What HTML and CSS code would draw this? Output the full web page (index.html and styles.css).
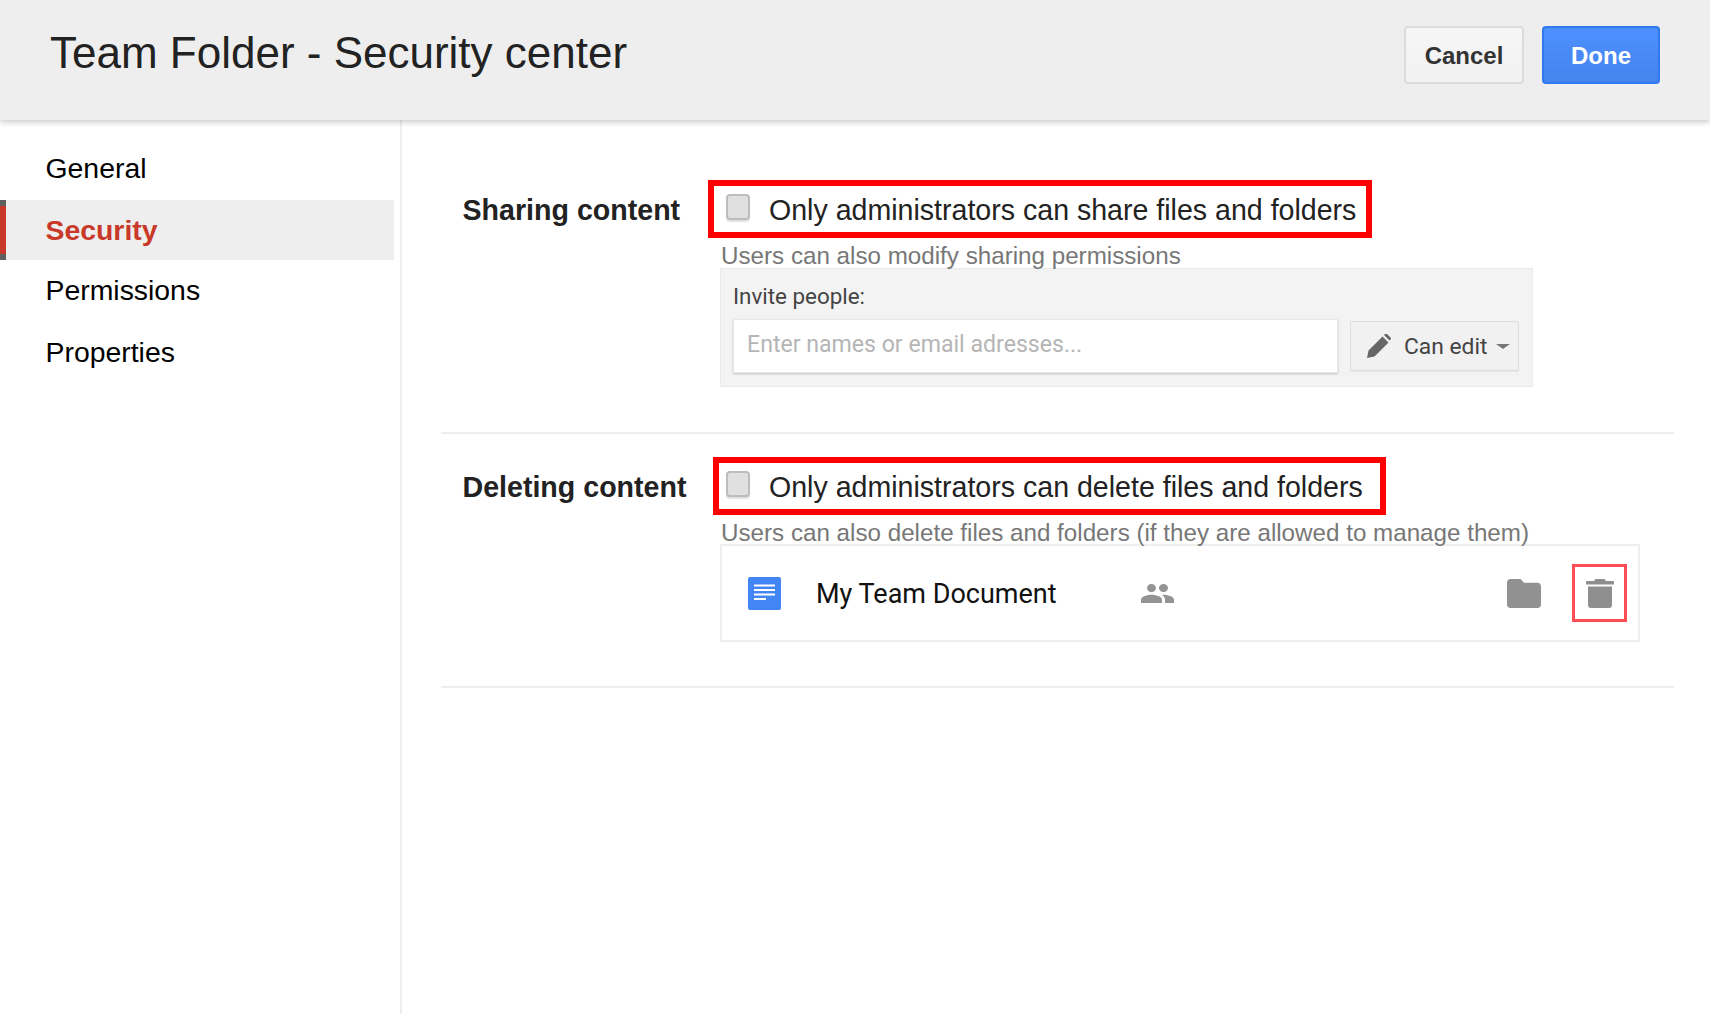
FILE: index.html
```html
<!DOCTYPE html>
<html lang="en">
<head>
<meta charset="utf-8">
<title>Team Folder - Security center</title>
<link rel="stylesheet" href="styles.css">
</head>
<body>
<header class="topbar">
  <h1 class="title">Team Folder - Security center</h1>
  <div class="actions">
    <button class="btn btn-cancel">Cancel</button>
    <button class="btn btn-done">Done</button>
  </div>
</header>
<div class="layout">
  <nav class="sidebar">
    <a class="nav-item nav-general">General</a>
    <a class="nav-item nav-active">Security</a>
    <a class="nav-item nav-perm">Permissions</a>
    <a class="nav-item nav-props">Properties</a>
  </nav>
  <main class="content">
    <section class="section section-share">
      <h2 class="label">Sharing content</h2>
      <div class="body">
        <label class="option option-share">
          <span class="check"></span>
          <span class="option-text">Only administrators can share files and folders</span>
        </label>
        <p class="hint">Users can also modify sharing permissions</p>
        <div class="invite">
          <div class="invite-label">Invite people:</div>
          <div class="invite-row">
            <div class="invite-input">Enter names or email adresses...</div>
            <div class="can-edit">
              <svg class="pencil" viewBox="0 0 24 24" aria-hidden="true"><path d="M0 24l1.500-7.500L15.500 2.500l6 6L7.500 22.500zM17 1l1-1q1-.6 2 0l3.500 3.500q.8 1 0 2l-1 1z"/></svg>
              <span class="can-edit-text">Can edit</span>
              <span class="caret"></span>
            </div>
          </div>
        </div>
      </div>
    </section>
    <section class="section section-delete">
      <h2 class="label">Deleting content</h2>
      <div class="body">
        <label class="option option-delete">
          <span class="check"></span>
          <span class="option-text">Only administrators can delete files and folders</span>
        </label>
        <p class="hint">Users can also delete files and folders (if they are allowed to manage them)</p>
        <div class="file-row">
          <svg class="doc-icon" viewBox="0 0 33 33" aria-hidden="true">
            <rect width="33" height="33" rx="2" fill="#4285f4"/>
            <path d="M6 8.500h21M6 13h21M6 17.500h21M6 22h12" stroke="#fff" stroke-width="2" fill="none"/>
          </svg>
          <span class="file-name">My Team Document</span>
          <svg class="people-icon" viewBox="1 5 22 14" preserveAspectRatio="none" aria-hidden="true"><path d="M16 11c1.660 0 2.990-1.340 2.990-3S17.660 5 16 5c-1.660 0-3 1.340-3 3s1.340 3 3 3zm-8 0c1.660 0 2.990-1.340 2.990-3S9.660 5 8 5C6.340 5 5 6.340 5 8s1.340 3 3 3zm0 2c-2.330 0-7 1.170-7 3.500V19h14v-2.500c0-2.330-4.670-3.500-7-3.500zm8 0c-.29 0-.62.02-.97.05 1.160.84 1.970 1.970 1.970 3.450V19h6v-2.500c0-2.330-4.670-3.500-7-3.500z"/></svg>
          <svg class="folder-icon" viewBox="2 4 20 16" preserveAspectRatio="none" aria-hidden="true"><path d="M10 4H4c-1.100 0-1.990.9-1.990 2L2 18c0 1.100.9 2 2 2h16c1.100 0 2-.9 2-2V8c0-1.100-.9-2-2-2h-8l-2-2z"/></svg>
          <div class="trash-box">
            <svg class="trash-icon" viewBox="0 0 28 29" aria-hidden="true"><path d="M0 5.500V3q0-1 1-1h7l1.500-2h9l1.500 2h7q1 0 1 1v2.500zM2 7.500h24V26q0 3-3 3H5q-3 0-3-3z"/></svg>
          </div>
        </div>
      </div>
    </section>
  </main>
</div>
</body>
</html>
```

FILE: styles.css
```css
* { box-sizing: border-box; }
html, body { margin: 0; padding: 0; }
body {
  width: 1710px;
  height: 1014px;
  overflow: hidden;
  background: #fff;
  color: #222;
  font-family: "Liberation Sans", Arial, sans-serif;
  display: flex;
  flex-direction: column;
}
.topbar {
  flex: none;
  height: 120px;
  background: #eeeeee;
  display: flex;
  align-items: flex-start;
  justify-content: space-between;
  padding: 26px 50px 0 50px;
  box-shadow: 0 2px 6px rgba(0,0,0,.22);
  position: relative;
  z-index: 1;
}
.title {
  margin: 0;
  font-size: 44px;
  line-height: 54px;
  font-weight: 400;
  color: #222;
}
.actions { display: flex; gap: 18px; }
.btn {
  height: 58px;
  padding: 2px 0 0;
  font-family: inherit;
  font-size: 24px;
  font-weight: 700;
  border-radius: 4px;
}
.btn-cancel {
  width: 120px;
  background: linear-gradient(#f6f6f6, #f1f1f1);
  border: 2px solid #dcdcdc;
  color: #333;
}
.btn-done {
  width: 118px;
  background: linear-gradient(#4d90fe, #4583ee);
  border: 2px solid #3079ed;
  color: #fff;
}
.layout { flex: 1; display: flex; min-height: 0; }
.sidebar {
  flex: none;
  width: 402px;
  border-right: 2px solid #eeeeee;
  padding: 0 6px 0 0;
  display: flex;
  flex-direction: column;
}
.nav-item {
  display: flex;
  align-items: center;
  padding-left: 45.5px;
  font-size: 28.4px;
  color: #000;
}
.nav-general { height: 60px; margin-top: 18px; margin-bottom: 2px; }
.nav-perm { height: 60px; }
.nav-props { height: 64px; }
.nav-active {
  height: 60px;
  background: #eeeeee;
  color: #c9392a;
  font-weight: 700;
  position: relative;
}
.nav-active::before {
  content: "";
  position: absolute;
  left: 0;
  top: 0;
  bottom: 0;
  width: 6px;
  background: linear-gradient(#5f5f5f 0 6px, #c9392a 6px 54px, #5f5f5f 54px);
}
.content {
  flex: 1;
  padding: 0 36px 0 39px;
}
.section {
  display: grid;
  grid-template-columns: 257.5px 1fr;
  padding-left: 21.5px;
  border-bottom: 2px solid #eeeeee;
}
.section-share { height: 314px; padding-top: 60px; }
.section-delete { height: 254px; padding-top: 23px; }
.label {
  margin: 0;
  font-size: 28.6px;
  line-height: 60px;
  font-weight: 700;
  color: #222;
  white-space: nowrap;
}
.body { min-width: 0; padding-left: 1px; }
.option {
  height: 58px;
  border: 6px solid #ff0000;
  display: inline-flex;
  align-items: center;
  vertical-align: top;
}
.option-share { margin-left: -13px; padding-left: 12px; padding-right: 10px; }
.option-delete { margin-left: -8px; padding-left: 7px; padding-right: 17px; }
.check {
  flex: none;
  width: 24px;
  height: 26px;
  margin-top: -4px;
  margin-right: 19px;
  border-radius: 4px;
  border: 2px solid #bdbdbd;
  background: #e0e0e0;
  box-shadow: 0 2px 1px rgba(0,0,0,.12);
}
.option-text { font-size: 28.57px; line-height: 48px; padding-top: 2px; color: #222; white-space: nowrap; }
.hint {
  margin: 0;
  height: 30px;
  font-size: 24.2px;
  line-height: 36px;
  color: #777;
  white-space: nowrap;
}
.invite {
  width: 813px;
  height: 119px;
  margin-left: -1px;
  background: #f3f3f3;
  border: 1px solid #eaeaea;
  padding: 0 13px 0 12px;
}
.invite-label {
  font-family: Roboto, sans-serif;
  font-size: 22.4px;
  line-height: 26px;
  margin-top: 14px;
  color: #444;
}
.invite-row {
  display: flex;
  align-items: center;
  gap: 12px;
  margin-top: 10px;
}
.invite-input {
  width: 605px;
  height: 54px;
  background: #fff;
  border: 1px solid #e8e8e8;
  box-shadow: 0 1px 2px rgba(0,0,0,.2);
  padding-left: 13px;
  font-family: Roboto, sans-serif;
  font-size: 23.1px;
  line-height: 50px;
  color: #b5b5b5;
  white-space: nowrap;
}
.can-edit {
  width: 169px;
  height: 50px;
  background: #f1f1f1;
  border: 1px solid #dedede;
  box-shadow: 0 1px 1px rgba(0,0,0,.06);
  display: flex;
  align-items: center;
  padding-left: 16px;
  border-radius: 2px;
}
.pencil { width: 24px; height: 24px; fill: #666; flex: none; }
.can-edit-text {
  font-family: Roboto, sans-serif;
  font-size: 22.8px;
  color: #444;
  margin-left: 13px;
}
.caret {
  width: 0;
  height: 0;
  margin-left: 9px;
  border-left: 7px solid transparent;
  border-right: 7px solid transparent;
  border-top: 5px solid #777;
}
.file-row {
  width: 920px;
  height: 98px;
  margin: -1px 0 0 -1px;
  border: 2px solid #eeeeee;
  display: flex;
  align-items: center;
  padding-left: 26px;
}
.doc-icon { width: 33px; height: 33px; flex: none; }
.file-name {
  font-family: Roboto, sans-serif;
  font-size: 27px;
  line-height: 36px;
  padding-top: 2px;
  color: #111;
  margin-left: 35px;
  width: 325px;
  white-space: nowrap;
}
.people-icon { width: 33px; height: 19px; fill: #949494; flex: none; }
.folder-icon { width: 34px; height: 29px; fill: #919191; flex: none; margin-left: 333px; }
.trash-box {
  width: 55px;
  height: 58px;
  margin-left: 31px;
  border: 3px solid #ff4d55;
  display: flex;
  align-items: center;
  justify-content: center;
  flex: none;
}
.trash-icon { width: 28px; height: 29px; fill: #8f8f8f; }
```
